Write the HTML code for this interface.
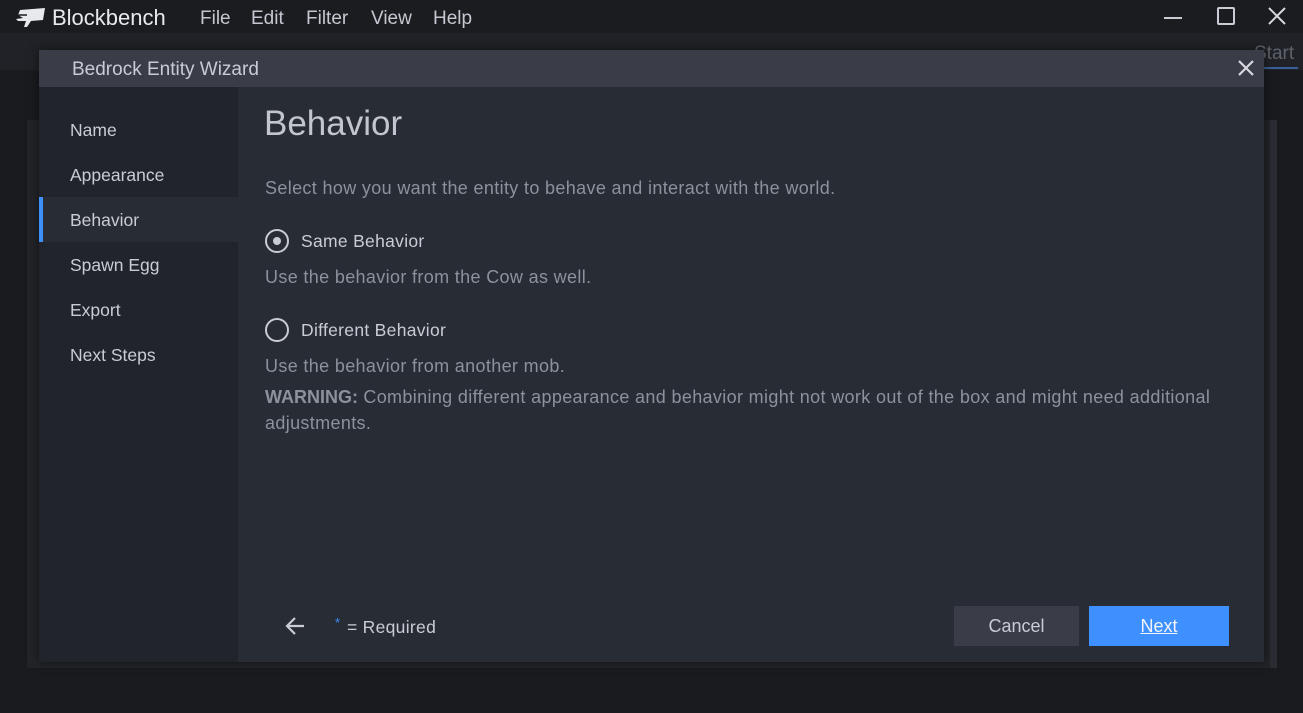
<!DOCTYPE html>
<html><head><meta charset="utf-8"><style>
*{box-sizing:border-box;margin:0;padding:0}
body{width:1303px;height:713px;overflow:hidden;background:#1a1b1f;font-family:"Liberation Sans",sans-serif;color:#c9cbd3;position:relative}
.abs{position:absolute}
.top{left:0;top:0;width:1303px;height:33px;background:#1b1c20}
.bar2{left:0;top:33px;width:1303px;height:37px;background:#202227}
.menu{top:7px;font-size:19px;color:#c5c8d2}
.panel{left:27px;top:120px;width:1250px;height:548px;background:#222429}
.dlg{left:39px;top:50px;width:1225px;height:612px;background:#282c35;box-shadow:0 0 10px rgba(0,0,0,.5)}
.tb{left:0;top:0;width:1225px;height:37px;background:#3a3d48;font-size:19px;color:#c9ccd4;padding:9px 0 0 33px}
.side{left:0;top:37px;width:199px;height:575px;background:#21242b}
.item{position:absolute;left:0;width:199px;height:45px;font-size:17.5px;padding:13px 0 0 31px;color:#c9ccd4}
.sel{background:#282c35;border-left:4px solid #3e90ff;padding-left:27px}
.t{font-size:18px;color:#8d919b;white-space:nowrap;letter-spacing:.35px}
.rad{width:24px;height:24px;border:2.5px solid #c9ccd4;border-radius:50%}
.btn{font-size:18px;text-align:center;padding-top:10px}
</style></head><body>
<div class="abs top"></div>
<div class="abs bar2"></div>
<svg class="abs" style="left:15px;top:7px" width="31" height="21" viewBox="0 0 31 21"><path d="M5 3 L30 1 L28 13 L16 14 L12 20 L9 20 L11 14 L3 14 L1 12 L8 11 L3 8 Z" fill="#e8e9ec"/><path d="M3 8 L12 8" stroke="#1b1c20" stroke-width="1.5"/></svg>
<div class="abs menu" style="left:52px;top:5px;font-size:22px;color:#e8e9ec">Blockbench</div>
<div class="abs menu" style="left:200px;top:8px">File</div>
<div class="abs menu" style="left:251px;top:8px">Edit</div>
<div class="abs menu" style="left:306px;top:8px">Filter</div>
<div class="abs menu" style="left:371px;top:8px">View</div>
<div class="abs menu" style="left:433px;top:8px">Help</div>
<div class="abs" style="left:1164px;top:17px;width:18px;height:2px;background:#c9ccd4"></div>
<div class="abs" style="left:1217px;top:7px;width:18px;height:18px;border:2px solid #c9ccd4;border-radius:2px"></div>
<svg class="abs" style="left:1268px;top:7px" width="18" height="18"><path d="M1 1L17 17M17 1L1 17" stroke="#d6d8de" stroke-width="2"/></svg>
<div class="abs" style="left:1254px;top:43px;font-size:19px;color:#5e626c">Start</div>
<div class="abs" style="left:1262px;top:67px;width:36px;height:2px;background:#3a5f99"></div>
<div class="abs panel"></div>
<div class="abs" style="left:1270px;top:120px;width:7px;height:548px;background:#2a2d33"></div>
<div class="abs dlg">
 <div class="abs tb">Bedrock Entity Wizard</div>
 <svg class="abs" style="left:1199px;top:10px" width="16" height="16"><path d="M1 1L15 15M15 1L1 15" stroke="#d6d8de" stroke-width="2.2"/></svg>
 <div class="abs side">
  <div class="item" style="top:20px">Name</div>
  <div class="item" style="top:65px">Appearance</div>
  <div class="item sel" style="top:110px">Behavior</div>
  <div class="item" style="top:155px">Spawn Egg</div>
  <div class="item" style="top:200px">Export</div>
  <div class="item" style="top:245px">Next Steps</div>
 </div>
 <div class="abs" style="left:225px;top:54px;font-size:35px;font-weight:300;color:#c2c5cd">Behavior</div>
 <div class="abs t" style="left:226px;top:128px">Select how you want the entity to behave and interact with the world.</div>
 <div class="abs rad" style="left:226px;top:179px"><div style="width:8px;height:8px;background:#c9ccd4;border-radius:50%;margin:5.5px"></div></div>
 <div class="abs" style="left:262px;top:181px;font-size:17.5px;color:#c9ccd4;letter-spacing:.3px">Same Behavior</div>
 <div class="abs t" style="left:226px;top:217px">Use the behavior from the Cow as well.</div>
 <div class="abs rad" style="left:226px;top:268px"></div>
 <div class="abs" style="left:262px;top:270px;font-size:17.5px;color:#c9ccd4;letter-spacing:.3px">Different Behavior</div>
 <div class="abs t" style="left:226px;top:306px">Use the behavior from another mob.</div>
 <div class="abs t" style="left:226px;top:334px;line-height:26px"><b style="color:#8d919b;letter-spacing:0">WARNING:</b> Combining different appearance and behavior might not work out of the box and might need additional<br>adjustments.</div>
 <svg class="abs" style="left:245px;top:566px" width="22" height="20"><path d="M20 10H3M11 2L3 10L11 18" stroke="#c9ccd4" stroke-width="2.2" fill="none"/></svg>
 <div class="abs" style="left:296px;top:565px;font-size:13px;color:#3e90ff">*</div>
 <div class="abs" style="left:308px;top:567px;font-size:17.5px;color:#c9ccd4;letter-spacing:.3px">= Required</div>
 <div class="abs btn" style="left:915px;top:556px;width:125px;height:40px;background:#3a3d48;color:#c9ccd4">Cancel</div>
 <div class="abs btn" style="left:1050px;top:556px;width:140px;height:40px;background:#3e90ff;color:#f2f4f8;text-decoration:underline">Next</div>
</div>
</body></html>
